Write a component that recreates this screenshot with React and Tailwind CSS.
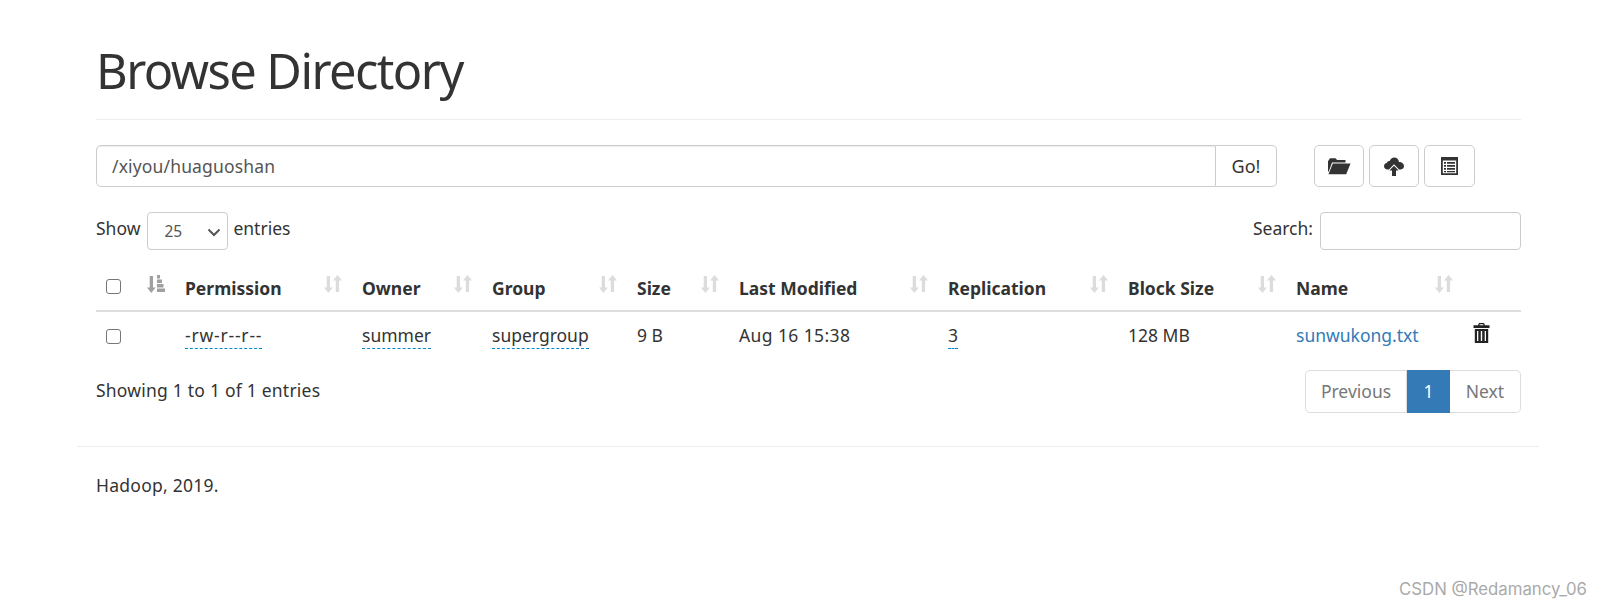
import React from "react";

const font = { fontFamily: '"Noto Sans", sans-serif' };

function SortIcon({ className = "" }) {
  return (
    <svg width="18" height="18" viewBox="0 0 18 18" className={`fill-[#dcdcdc] ${className}`}>
      <path d="M2.700 1h3.300v11.500h2.800L4.400 18 0 12.500h2.700z" />
      <path d="M11.800 17h3.300V5.500H18L13.500 0 9 5.500h2.800z" />
    </svg>
  );
}

function SortActiveIcon() {
  return (
    <svg width="18" height="18" viewBox="0 0 18 18" className="fill-[#a0a0a0] shrink-0">
      <path d="M2.700 1h3.300v11.500h2.600L4.300 18 0 12.500h2.700z" />
      <path d="M10 0h3v3.500h-3zM10 4.500h5v3.500h-5zM10 9h6.500v3.500H10zM10 13.500h8V17h-8z" />
    </svg>
  );
}

function FolderOpenIcon() {
  return (
    <svg width="24" height="18" viewBox="0 0 24 18" className="fill-[#333]">
      <path d="M1 4.200 3 1.200h5.500l1.600 1.800h8.400v2.400H5L1.800 14.500H1z" />
      <path d="M5.800 6.600H23.500L19.200 17.200H1.500z" />
    </svg>
  );
}

function CloudUploadIcon() {
  return (
    <svg width="20" height="20" viewBox="0 0 20 20" className="fill-[#333]">
      <path d="M5 13.500H3.600C1.500 13.500 0 12 0 10.200c0-1.600 1.200-3 2.800-3.200C3.100 5.500 4.400 4.700 5.700 5 6.500 2.800 8.200 1.500 10.300 1.500c2.500 0 4.500 1.900 4.700 4.400 2.700-.2 5 1.500 5 4.100 0 2-1.500 3.500-3.600 3.500H15l-5-5.300z" />
      <path d="M10 9.700 14.600 14.500H12V20H8v-5.500H5.400z" />
    </svg>
  );
}

function ListAltIcon() {
  return (
    <svg width="17" height="18" viewBox="0 0 17 18" className="fill-[#333]">
      <path fillRule="evenodd" d="M0 0h17v18H0zM1.800 3.500v12.700h13.400V3.500z" />
      <path d="M3 5h2v1.800H3zM6 5h8v1.800H6zM3 8h2v1.800H3zM6 8h8v1.800H6zM3 11h2v1.800H3zM6 11h8v1.800H6zM3 14h2v1.200H3zM6 14h8v1.200H6z" />
    </svg>
  );
}

function TrashIcon() {
  return (
    <svg width="17" height="20" viewBox="0 0 17 20" className="fill-[#222]">
      <path d="M6 0h5l1 2.200h4.500V5H.5V2.200H5zM6.800 1.200 6.400 2.200h4.200l-.4-1z" fillRule="evenodd" />
      <path fillRule="evenodd" d="M1.800 6h13.400v14H1.800zM4 8v10h1.300V8zM7.800 8v10h1.400V8zM11.700 8v10H13V8z" />
    </svg>
  );
}

function Check() {
  return <input type="checkbox" className="appearance-none block w-[15px] h-[15px] border-[1.5px] border-[#767676] rounded-[3px] bg-white" />;
}

function Dotted({ children, className = "" }) {
  return <span className={`border-b-[1.5px] border-dashed border-[#0088cc] pb-[1px] ${className}`}>{children}</span>;
}

const headers = [
  { label: "Permission", width: "w-[177px]" },
  { label: "Owner", width: "w-[130px]" },
  { label: "Group", width: "w-[145px]" },
  { label: "Size", width: "w-[102px]" },
  { label: "Last Modified", width: "w-[209px]" },
  { label: "Replication", width: "w-[180px]" },
  { label: "Block Size", width: "w-[168px]" },
  { label: "Name", width: "w-[177px]" },
];

export default function App() {
  return (
    <div style={font} className="relative min-h-[608px] bg-white text-[#333] text-[17.5px] leading-[25px] overflow-hidden">
      <div className="w-[1462px] ml-[77px] pl-[19px] pr-[18px]">
        <div className="pt-[40px] pb-[19px] border-b border-[#eeeeee]">
          <h1 className="text-[48.75px] leading-[60px] font-normal text-[#333] tracking-[-1.55px]">Browse Directory</h1>
        </div>

        <div className="flex mt-[25px]">
          <div className="flex w-[1181px] h-[42px]">
            <input
              readOnly
              value="/xiyou/huaguoshan"
              style={font}
              className="flex-1 min-w-0 border border-[#cccccc] rounded-l-[5px] px-[15px] text-[17.5px] tracking-[0.15px] text-[#555] shadow-[inset_0_1px_1px_rgba(0,0,0,0.075)] outline-none"
            />
            <button className="w-[61px] border border-l-0 border-[#cccccc] rounded-r-[5px] text-[#333] bg-white text-[18px]">Go!</button>
          </div>
          <div className="flex ml-[37px] gap-[5px]">
            <button className="w-[50px] h-[42px] border border-[#cccccc] rounded-[5px] flex items-center justify-center"><FolderOpenIcon /></button>
            <button className="w-[50px] h-[42px] border border-[#cccccc] rounded-[5px] flex items-center justify-center"><CloudUploadIcon /></button>
            <button className="w-[51px] h-[42px] border border-[#cccccc] rounded-[5px] flex items-center justify-center"><ListAltIcon /></button>
          </div>
        </div>

        <div className="flex justify-between items-center mt-[25px] h-[38px]">
          <div className="flex items-center">
            <span className="pb-[6px]">Show</span>
            <div className="relative ml-[7px] mr-[5px] w-[81px] h-[38px] border border-[#cccccc] rounded-[4px] flex items-center pl-[16px] text-[15.500px] text-[#555]">
              25
              <svg width="14" height="9" viewBox="0 0 14 9" className="absolute right-[6px] top-[15px] stroke-[#555] fill-none stroke-2">
                <path d="M1.500 1.500 7 7l5.500-5.500" />
              </svg>
            </div>
            <span className="pb-[6px]">entries</span>
          </div>
          <div className="flex items-center">
            <span className="pb-[6px]">Search:</span>
            <input className="ml-[7px] w-[201px] h-[38px] border border-[#cccccc] rounded-[4px] outline-none" />
          </div>
        </div>

        <div className="mt-[22px]">
          <div className="flex h-[40px] border-b-2 border-[#dddddd] font-bold text-[#333]">
            <div className="w-[40px] pl-[10px] pt-[7px] shrink-0"><Check /></div>
            <div className="w-[36.500px] pl-[11px] pt-[3px] shrink-0"><SortActiveIcon /></div>
            {headers.map((h) => (
              <div key={h.label} className={`${h.width} pl-[12.500px] shrink-0 relative pt-[4px]`}>
                <span className="whitespace-nowrap">{h.label}</span>
                <div className="absolute top-[3px] right-[7.500px] flex"><SortIcon /></div>
              </div>
            ))}
          </div>
          <div className="flex h-[47px] pt-[11px]">
            <div className="w-[40px] pl-[10px] pt-[6px] shrink-0"><Check /></div>
            <div className="w-[36.500px] shrink-0" />
            <div className="w-[177px] pl-[12.500px] shrink-0"><Dotted className="tracking-[0.8px]">-rw-r--r--</Dotted></div>
            <div className="w-[130px] pl-[12.500px] shrink-0"><Dotted>summer</Dotted></div>
            <div className="w-[145px] pl-[12.500px] shrink-0"><Dotted>supergroup</Dotted></div>
            <div className="w-[102px] pl-[12.500px] shrink-0">9 B</div>
            <div className="w-[209px] pl-[12.500px] shrink-0 tracking-[0.4px]">Aug 16 15:38</div>
            <div className="w-[180px] pl-[12.500px] shrink-0"><Dotted>3</Dotted></div>
            <div className="w-[168px] pl-[12.500px] shrink-0">128 MB</div>
            <div className="w-[177px] pl-[12.500px] shrink-0 text-[#337ab7]">sunwukong.txt</div>
            <div className="shrink-0 ml-[12.500px]"><TrashIcon /></div>
          </div>
        </div>

        <div className="flex justify-between items-start mt-[11px]">
          <div className="pt-[8px] tracking-[0.22px]">Showing 1 to 1 of 1 entries</div>
          <div className="flex h-[43px]">
            <div className="w-[102px] border border-[#dddddd] rounded-l-[5px] flex items-center justify-center text-[#777]">Previous</div>
            <div className="w-[43px] bg-[#337ab7] text-white flex items-center justify-center">1</div>
            <div className="w-[71px] border border-l-0 border-[#dddddd] rounded-r-[5px] flex items-center justify-center text-[#777]">Next</div>
          </div>
        </div>
      </div>

      <div className="w-[1462px] ml-[77px] mt-[33px] border-t border-[#eeeeee] px-[19px] pt-[26px] tracking-[0.25px]">Hadoop, 2019.</div>

      <div className="absolute left-[1399px] top-[578px] text-[16.800px] leading-[22px] text-[#aaaaaa] whitespace-nowrap" style={{ fontFamily: "Inter, sans-serif" }}>
        CSDN @Redamancy_06
      </div>
    </div>
  );
}
